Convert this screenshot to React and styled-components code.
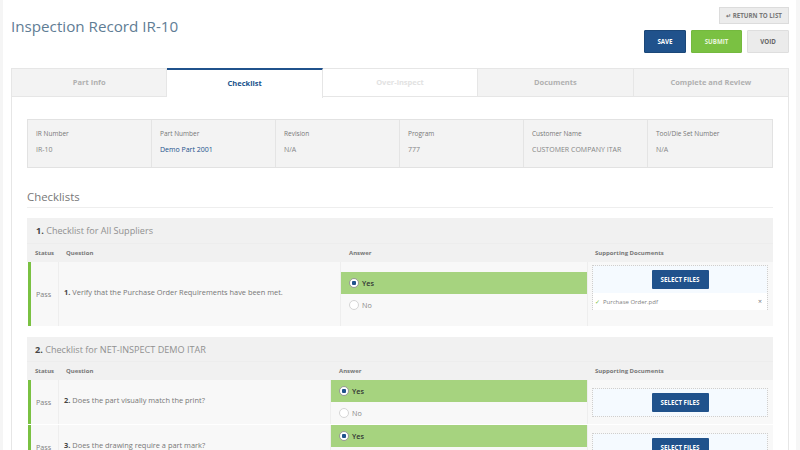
import React from 'react';
import styled, { createGlobalStyle } from 'styled-components';

const GlobalStyle = createGlobalStyle`
  html, body { margin: 0; padding: 0; background: #fff; overflow: hidden; }
  body { font-family: "Open Sans", "Liberation Sans", sans-serif; color: #666; }
  * { box-sizing: border-box; }
`;

const infoFields = [
  { label: 'IR Number', value: 'IR-10' },
  { label: 'Part Number', value: 'Demo Part 2001', link: true },
  { label: 'Revision', value: 'N/A' },
  { label: 'Program', value: '777' },
  { label: 'Customer Name', value: 'CUSTOMER COMPANY ITAR' },
  { label: 'Tool/Die Set Number', value: 'N/A' },
];

const tabs = [
  { title: 'Part Info' },
  { title: 'Checklist', active: true },
  { title: 'Over-inspect', disabled: true },
  { title: 'Documents' },
  { title: 'Complete and Review' },
];

const Page = styled.div`
  width: 800px;
  height: 450px;
  overflow: hidden;
  padding: 0 7px 0 8px;
  border-left: 3px solid #f5f5f5;
  border-right: 4px solid #f6f6f6;
`;
const Header = styled.header`
  display: flex;
  justify-content: space-between;
  height: 68px;
`;
const Title = styled.h1`
  margin: 14px 0 0;
  font-size: 15.2px;
  line-height: 24px;
  font-weight: 400;
  color: #5f7d95;
`;
const Actions = styled.div`
  display: flex;
  flex-direction: column;
  align-items: flex-end;
  padding-top: 7px;
  gap: 6px;
`;
const ReturnButton = styled.button`
  width: 70px;
  height: 17px;
  padding: 0;
  border: 1px solid #dcdcdc;
  background: #ececec;
  color: #777;
  font: 700 6.2px/15px "Open Sans", sans-serif;
  white-space: nowrap;
`;
const ActionRow = styled.div`
  display: flex;
  gap: 5px;
`;
const ActionButton = styled.button`
  width: ${({ $w }) => $w}px;
  height: 23px;
  padding: 0;
  border: 1px solid ${({ $border }) => $border};
  border-radius: 1px;
  background: ${({ $bg }) => $bg};
  color: ${({ $color }) => $color};
  font: 700 6.2px/21px "Open Sans", sans-serif;
`;
const TabBar = styled.nav`
  display: flex;
  height: 29px;
  border: 1px solid #e6e6e6;
  border-bottom: 0;
`;
const Tab = styled.div`
  flex: 1;
  display: flex;
  align-items: center;
  justify-content: center;
  padding-bottom: 2px;
  font-size: 7.5px;
  font-weight: 700;
  margin-top: ${({ $active }) => ($active ? '-1px' : '0')};
  color: ${({ $active, $disabled }) => ($active ? '#20528c' : $disabled ? '#e2e2e2' : '#b0b0b0')};
  background: ${({ $active, $disabled }) => ($active || $disabled ? '#fff' : '#f3f3f3')};
  border-top: ${({ $active }) => ($active ? '2px solid #20528c' : '0')};
  border-bottom: ${({ $active }) => ($active ? '0' : '1px solid #e6e6e6')};
  border-right: 1px solid #e6e6e6;
  margin-bottom: ${({ $active }) => ($active ? '-1px' : '0')};
  height: ${({ $active }) => ($active ? '30px' : 'auto')};
  &:last-child { border-right: 0; }
`;
const Panel = styled.main`
  height: 360px;
  padding: 22px 15px 0;
  border: 1px solid #e6e6e6;
  border-top: 0;
  overflow: hidden;
`;
const InfoGrid = styled.div`
  display: grid;
  grid-template-columns: repeat(6, 1fr);
  height: 49px;
  background: #f3f3f3;
  border: 1px solid #e2e2e2;
`;
const InfoCell = styled.div`
  padding: 9px 8px 0;
  border-right: 1px solid #e4e4e4;
  font-size: 6.5px;
  line-height: 10px;
  color: #777;
  &:last-child { border-right: 0; }
`;
const InfoValue = styled.div`
  margin-top: 6px;
  font-size: 7px;
  color: ${({ $link }) => ($link ? '#20528c' : '#858585')};
`;
const SectionTitle = styled.h2`
  margin: 21px 0 10px;
  padding-bottom: 3px;
  height: 19px;
  font-size: 11.4px;
  line-height: 16px;
  font-weight: 400;
  color: #777;
  border-bottom: 1px solid #eee;
`;
const Checklist = styled.section`
  margin-bottom: 11px;
`;
const ChecklistHeader = styled.div`
  height: ${({ $h }) => $h}px;
  padding-left: ${({ $pad }) => $pad}px;
  background: #f1f1f1;
  font-size: 9.1px;
  line-height: 25px;
  color: #909090;
  & b { color: #444; font-weight: 700; }
`;
const Columns = styled.div`
  display: grid;
  grid-template-columns: ${({ $answerAt }) => `31px ${$answerAt - 58}px 1fr 186px`};
  background: #f1f1f1;
  height: 19px;
  border-top: 1px solid #ededed;
`;
const ColumnHead = styled.div`
  padding-left: 8px;
  font-size: 6px;
  line-height: 18px;
  font-weight: 700;
  color: #777;
`;
const Row = styled.div`
  display: grid;
  grid-template-columns: ${({ $answerAt }) => `27px ${$answerAt - 58}px 1fr 186px`};
  height: ${({ $h }) => $h}px;
  background: #f8f8f8;
  border-left: 3px solid #7ac142;
  margin-left: 1px;
  margin-bottom: 1px;
`;
const StatusCell = styled.div`
  display: flex;
  align-items: center;
  padding-left: 5px;
  font-size: 7.2px;
  color: #808080;
`;
const QuestionCell = styled.div`
  display: flex;
  align-items: center;
  gap: 2px;
  padding-left: 5px;
  padding-bottom: 5px;
  font-size: 7.4px;
  color: #777;
  border-left: 1px solid #eee;
  border-right: 1px solid #eee;
  & b { color: #444; }
`;
const AnswerCell = styled.div`
  display: flex;
  flex-direction: column;
  justify-content: ${({ $top }) => ($top ? 'flex-start' : 'center')};
`;
const Option = styled.div`
  display: flex;
  align-items: center;
  gap: 3px;
  height: 22px;
  padding-left: 8px;
  font-size: 7.2px;
  font-weight: ${({ $on }) => ($on ? 600 : 400)};
  color: ${({ $on }) => ($on ? '#333' : '#888')};
  background: ${({ $on }) => ($on ? '#a6d37f' : 'transparent')};
`;
const Radio = styled.span`
  width: 10px;
  height: 10px;
  border-radius: 50%;
  background: ${({ $on }) => ($on ? 'radial-gradient(circle, #20528c 0 2px, #fff 2.5px)' : '#fff')};
  border: 1px solid ${({ $on }) => ($on ? '#9a9a9a' : '#d5d5d5')};
`;
const DocsCell = styled.div`
  padding: ${({ $pad }) => $pad}px 5px 0 4px;
  border-left: 1px solid #eee;
`;
const UploadBox = styled.div`
  border: 1px dotted #cfcfcf;
  border-bottom: ${({ $files }) => ($files ? '0' : '1px dotted #cfcfcf')};
`;
const DropZone = styled.div`
  display: flex;
  align-items: center;
  justify-content: center;
  height: 27px;
  background: #f5faff;
`;
const SelectButton = styled.button`
  width: 57px;
  height: 19px;
  padding: 0;
  border: 0;
  border-radius: 1px;
  background: #20528c;
  color: #fff;
  font: 700 6.2px/19px "Open Sans", sans-serif;
`;
const FileRow = styled.div`
  display: flex;
  align-items: center;
  justify-content: space-between;
  height: 17px;
  padding: 0 5px 0 2px;
  background: #fff;
  font-size: 6px;
  color: #808080;
`;
const Check = styled.span`
  color: #7ac142;
  margin-right: 3px;
`;
const Remove = styled.span`
  color: #777;
  font-size: 7px;
`;

const Answer = ({ top }) => (
  <AnswerCell $top={top}>
    <Option $on><Radio $on />Yes</Option>
    <Option><Radio />No</Option>
  </AnswerCell>
);

const ColumnTitles = ({ answerAt }) => (
  <Columns $answerAt={answerAt}>
    <ColumnHead>Status</ColumnHead>
    <ColumnHead>Question</ColumnHead>
    <ColumnHead>Answer</ColumnHead>
    <ColumnHead>Supporting Documents</ColumnHead>
  </Columns>
);

export default function App() {
  return (
    <Page>
      <GlobalStyle />
      <Header>
        <Title>Inspection Record IR-10</Title>
        <Actions>
          <ReturnButton>↵ RETURN TO LIST</ReturnButton>
          <ActionRow>
            <ActionButton $w={42} $bg="#20528c" $border="#1b4778" $color="#fff">SAVE</ActionButton>
            <ActionButton $w={51} $bg="#7ac142" $border="#74b93e" $color="#e8f5dc">SUBMIT</ActionButton>
            <ActionButton $w={42} $bg="#ebebeb" $border="#dedede" $color="#666">VOID</ActionButton>
          </ActionRow>
        </Actions>
      </Header>
      <TabBar>
        {tabs.map((tab) => (
          <Tab key={tab.title} $active={tab.active} $disabled={tab.disabled}>{tab.title}</Tab>
        ))}
      </TabBar>
      <Panel>
        <InfoGrid>
          {infoFields.map((field) => (
            <InfoCell key={field.label}>
              {field.label}
              <InfoValue $link={field.link}>{field.value}</InfoValue>
            </InfoCell>
          ))}
        </InfoGrid>
        <SectionTitle>Checklists</SectionTitle>
        <Checklist>
          <ChecklistHeader $pad={9} $h={25}><b>1.</b> Checklist for All Suppliers</ChecklistHeader>
          <ColumnTitles answerAt={341} />
          <Row $answerAt={341} $h={64}>
            <StatusCell>Pass</StatusCell>
            <QuestionCell><b>1.</b> Verify that the Purchase Order Requirements have been met.</QuestionCell>
            <Answer />
            <DocsCell $pad={3}>
              <UploadBox $files>
                <DropZone><SelectButton>SELECT FILES</SelectButton></DropZone>
                <FileRow>
                  <span><Check>✓</Check>Purchase Order.pdf</span>
                  <Remove>×</Remove>
                </FileRow>
              </UploadBox>
            </DocsCell>
          </Row>
        </Checklist>
        <Checklist>
          <ChecklistHeader $pad={8} $h={24}><b>2.</b> Checklist for NET-INSPECT DEMO ITAR</ChecklistHeader>
          <ColumnTitles answerAt={331} />
          <Row $answerAt={331} $h={44}>
            <StatusCell>Pass</StatusCell>
            <QuestionCell><b>2.</b> Does the part visually match the print?</QuestionCell>
            <Answer top />
            <DocsCell $pad={8}>
              <UploadBox>
                <DropZone><SelectButton>SELECT FILES</SelectButton></DropZone>
              </UploadBox>
            </DocsCell>
          </Row>
          <Row $answerAt={331} $h={44}>
            <StatusCell>Pass</StatusCell>
            <QuestionCell><b>3.</b> Does the drawing require a part mark?</QuestionCell>
            <Answer top />
            <DocsCell $pad={8}>
              <UploadBox>
                <DropZone><SelectButton>SELECT FILES</SelectButton></DropZone>
              </UploadBox>
            </DocsCell>
          </Row>
        </Checklist>
      </Panel>
    </Page>
  );
}
